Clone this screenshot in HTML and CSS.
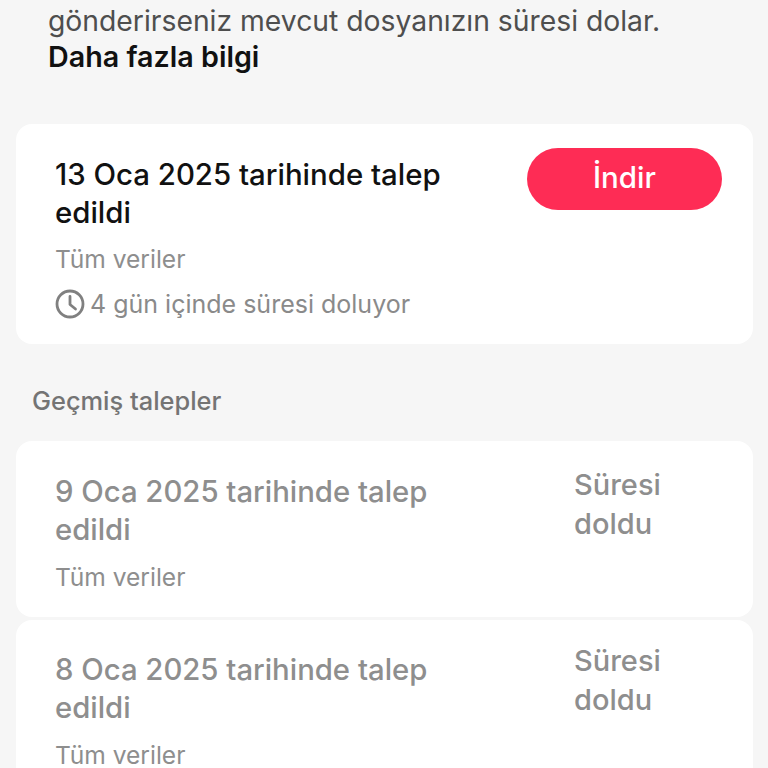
FILE: index.html
```html
<!DOCTYPE html>
<html lang="tr">
<head>
<meta charset="utf-8">
<title>Talepler</title>
<link rel="stylesheet" href="styles.css">
</head>
<body>
<div class="page">
  <p class="intro">gönderirseniz mevcut dosyanızın süresi dolar.<br><a class="more">Daha fazla bilgi</a></p>
  <section class="card active">
    <div class="info">
      <h2 class="title">13 Oca 2025 tarihinde talep edildi</h2>
      <p class="sub">Tüm veriler</p>
      <p class="sub expiry"><svg class="clock" viewBox="0 0 30 30"><circle cx="15" cy="15" r="13" fill="none" stroke="#808080" stroke-width="2.8"/><path d="M15 7.5V15.5L20.5 20" fill="none" stroke="#808080" stroke-width="2.8" stroke-linecap="round" stroke-linejoin="round"/></svg>4 gün içinde süresi doluyor</p>
    </div>
    <button class="download">İndir</button>
  </section>
  <h3 class="heading">Geçmiş talepler</h3>
  <section class="card past">
    <div class="info">
      <h2 class="title">9 Oca 2025 tarihinde talep edildi</h2>
      <p class="sub">Tüm veriler</p>
    </div>
    <div class="status">Süresi doldu</div>
  </section>
  <section class="card past next">
    <div class="info">
      <h2 class="title">8 Oca 2025 tarihinde talep edildi</h2>
      <p class="sub">Tüm veriler</p>
    </div>
    <div class="status">Süresi doldu</div>
  </section>
</div>
</body>
</html>
```
FILE: styles.css
```css
html, body { margin: 0; height: 100%; overflow: hidden; background: #f6f6f6; }
body { font-family: "Inter", "Liberation Sans", sans-serif; }
.page { padding: 3px 15px 0 16px; }
.intro { margin: 0 0 49px 32px; font-size: 28.3px; line-height: 36px; color: #4e4e4e; }
.more { color: #111; font-weight: 600; font-size: 28.7px; }
.card { display: flex; justify-content: space-between; background: #fff; border-radius: 16px; padding: 30px 31px 0 39px; box-sizing: border-box; }
.active { height: 220px; padding-top: 24px; }
.past { height: 176px; margin-bottom: 3px; padding-top: 32px; }
.next { padding-top: 31px; }
.active .info { padding-top: 8px; }
.info { width: 425px; }
.title { margin: 0; font-size: 29.4px; line-height: 38px; font-weight: 500; color: #111; }
.past .title, .status { color: #8e8e8e; }
.past .title { font-size: 29.3px; }
.sub { margin: 10px 0 0; font-size: 24.6px; line-height: 34px; color: #8e8e8e; }
.past .sub { margin-top: 11px; }
.next .sub { margin-top: 16px; line-height: 24px; }
.expiry { display: flex; align-items: center; gap: 5px; margin-top: 11px; font-size: 25px; color: #8a8a8a; }
.clock { width: 30px; height: 30px; flex: none; }
.download { width: 195px; height: 62px; border: 0; border-radius: 31px; background: #fe2c55; color: #fff; font: 500 29.5px "Inter", "Liberation Sans", sans-serif; padding-bottom: 6px; }
.heading { margin: 40px 0 23px 16px; font-size: 25.4px; line-height: 34px; font-weight: 500; color: #747474; }
.status { width: 117px; margin: -8px 31px 0 0; font-size: 29px; line-height: 39px; font-weight: 500; }
.next .status { margin-top: -10px; }
```
